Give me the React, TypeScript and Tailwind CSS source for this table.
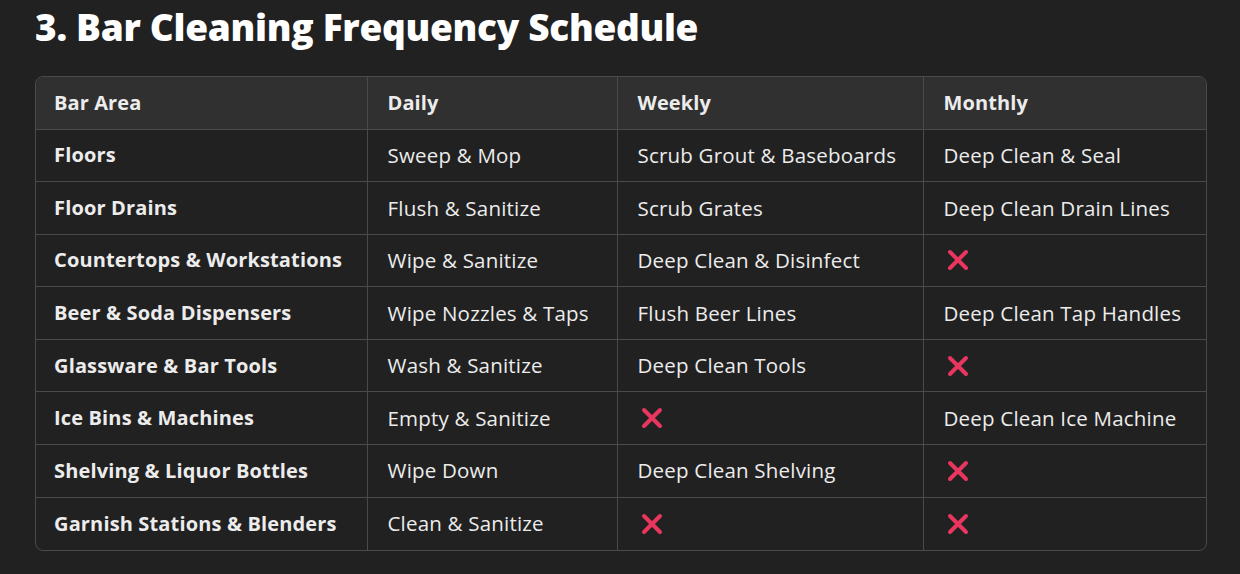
const rows: [string, string, string, string][] = [
  ['Floors', 'Sweep & Mop', 'Scrub Grout & Baseboards', 'Deep Clean & Seal'],
  ['Floor Drains', 'Flush & Sanitize', 'Scrub Grates', 'Deep Clean Drain Lines'],
  ['Countertops & Workstations', 'Wipe & Sanitize', 'Deep Clean & Disinfect', 'x'],
  ['Beer & Soda Dispensers', 'Wipe Nozzles & Taps', 'Flush Beer Lines', 'Deep Clean Tap Handles'],
  ['Glassware & Bar Tools', 'Wash & Sanitize', 'Deep Clean Tools', 'x'],
  ['Ice Bins & Machines', 'Empty & Sanitize', 'x', 'Deep Clean Ice Machine'],
  ['Shelving & Liquor Bottles', 'Wipe Down', 'Deep Clean Shelving', 'x'],
  ['Garnish Stations & Blenders', 'Clean & Sanitize', 'x', 'x'],
];

function Cross() {
  return (
    <svg width="24" height="24" viewBox="0 0 24 24" className="block ml-[2px]">
      <path d="M4 4L20 20M20 4L4 20" stroke="#e8365f" strokeWidth="4" strokeLinecap="round" />
    </svg>
  );
}

export default function App() {
  return (
    <div
      className="w-[1240px] h-[574px] bg-[#212121] text-[#ececec] overflow-hidden"
      style={{ fontFamily: '"Open Sans", "Noto Sans", sans-serif' }}
    >
      <h1 className="pl-[35px] pt-[4px] text-[37px] font-extrabold leading-[46px] text-white tracking-[-0.3px]">
        3. Bar Cleaning Frequency Schedule
      </h1>

      <div className="ml-[35px] mt-[26px] w-[1172px] rounded-lg border border-[#4a4a4a] overflow-hidden">
        <table className="w-full border-collapse table-fixed text-[20.5px] tracking-[0.2px] whitespace-nowrap">
          <colgroup>
            <col className="w-[331px]" />
            <col className="w-[250px]" />
            <col className="w-[306px]" />
            <col />
          </colgroup>
          <thead>
            <tr className="bg-[#303030] h-[52px]">
              {['Bar Area', 'Daily', 'Weekly', 'Monthly'].map((h, i) => (
                <th
                  key={h}
                  className={`text-left font-bold text-[20px] tracking-[0.1px] pl-[18px] pr-[2px] border-[#4a4a4a] ${i > 0 ? 'border-l pl-[20px]' : ''}`}
                >
                  {h}
                </th>
              ))}
            </tr>
          </thead>
          <tbody>
            {rows.map((r) => (
              <tr key={r[0]} className="h-[52.6px] border-t border-[#4a4a4a]">
                {r.map((c, i) => (
                  <td
                    key={i}
                    className={`pl-[18px] pr-[2px] border-[#4a4a4a] ${i === 0 ? 'font-bold text-[20px] tracking-[0.15px]' : 'border-l pl-[20px]'}`}
                  >
                    {c === 'x' ? <Cross /> : c}
                  </td>
                ))}
              </tr>
            ))}
          </tbody>
        </table>
      </div>
    </div>
  );
}
